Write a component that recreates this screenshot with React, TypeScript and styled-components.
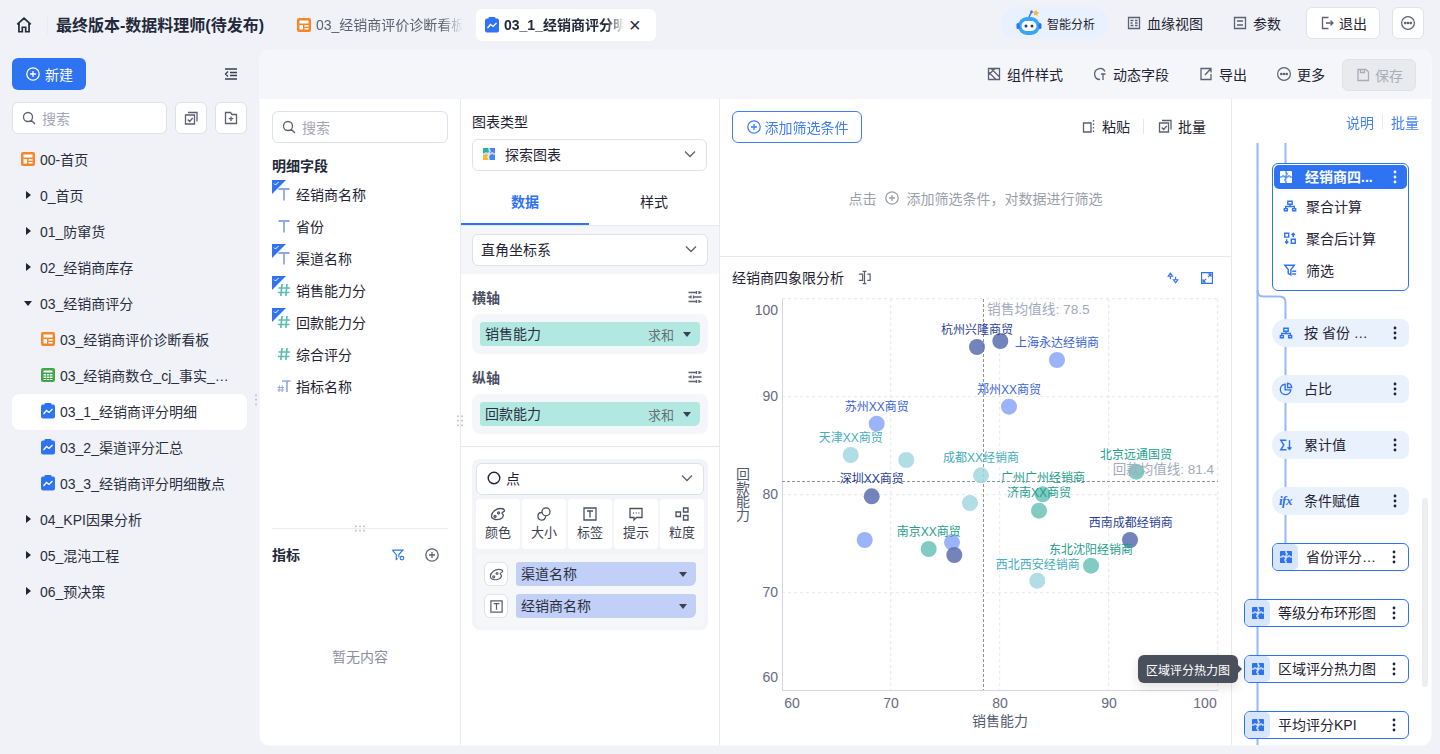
import React from 'react';
import styled, { createGlobalStyle } from 'styled-components';

const BLUE = '#2e73f2';
const INK = '#1f2333';
const ICON = '#5c6070';

const GlobalStyle = createGlobalStyle`
  html, body { margin: 0; padding: 0; height: 100%; }
  body {
    background: #f0f2f8;
    color: ${INK};
    font-family: "Liberation Sans", "Noto Sans CJK SC", sans-serif;
    font-size: 14px;
    overflow: hidden;
  }
  * { box-sizing: border-box; }
`;

/* ---------- icons ---------- */

const Line = ({ d, size = 16, color = ICON, width = 1.3 }: { d: string; size?: number; color?: string; width?: number }) => (
  <svg width={size} height={size} viewBox="0 0 16 16" fill="none" stroke={color} strokeWidth={width} style={{ flexShrink: 0 }}>
    <path d={d} />
  </svg>
);

const ICONS: Record<string, string> = {
  home: 'M2 7.5 8 2l6 5.5M3.5 6.5V14h3v-4h3v4h3V6.5',
  search: 'M7 2.5a4.5 4.5 0 1 0 0 9 4.5 4.5 0 0 0 0-9M10.3 10.3 14 14',
  collapse: 'M2 3h12M7 6.5h7M7 9.5h7M2 13h12M5 5.5 2.5 8 5 10.5',
  batch: 'M5 2.5h9v9M2.5 5h9v9h-9zM4.7 9.5l2 2 3-3.5',
  folderPlus: 'M2.5 2.5h5l1.5 2h4.5v9h-11zM8 6.5v4.5M5.8 8.7h4.5',
  style: 'M2.5 2.5h11v11h-11zM5 2.5l8.5 8.5M2.5 6l7.5 7.5M9 2.5 2.5 9',
  dynamic: 'M13 5.5A5.5 5.5 0 1 0 8 13.5M9 8h4.5M11 8v6',
  exportIcon: 'M9 2.5H3v11h10V8M7 9l5.5-6M9 2.5h4v4',
  save: 'M3 2.5h8l2.5 2.5v8.5H3zM5.5 2.5v3h4v-3',
  paste: 'M2.5 5h7.5v9H2.5zM12.5 2v1.5M12.5 5.5V7M12.5 9v1.5M12.5 12.5V14',
  lineage: 'M2.5 2.5h11v11h-11zM4.5 5.5h3M9 5.5h2.5M4.5 8h2M9 8h2.5M4.5 10.5h3M9 10.5h2.5',
  params: 'M2.5 2.5h11v11h-11zM5 6h6M5 10h6',
  logout: 'M9.5 2.5h-6v11h6M7 8h7M11.5 5.5 14 8l-2.5 2.5',
  sliders: 'M1.5 3.5h8M12 3.5h2.5M9.5 2v3M12 2v3M1.5 8H4M6.5 8h8M4 6.5v3M6.5 6.5v3M1.5 12.5h8M12 12.5h2.5M9.5 11v3M12 11v3',
  plusCircle: 'M8 1.8a6.2 6.2 0 1 0 0 12.4A6.2 6.2 0 0 0 8 1.8M8 5v6M5 8h6',
  filterDot: 'M1.5 2.5h12L9 7.5v3M6 7.5 1.5 2.5M6 7.5V13l1.5-1M12.5 9.5a2 2 0 1 0 0 4 2 2 0 0 0 0-4',
  palette: 'M1.5 10C1.5 6 6 2.5 10.5 2.5c2 0 4 1 4 2.3 0 1.2-2.5 1-2.5 2.4 0 1.3 1.8 1 1.3 2.6C13 12.5 9 14 5.5 13.5 3 13 1.5 12 1.5 10zM5 9.5a1 1 0 1 0 .1 0M8.5 6a1 1 0 1 0 .1 0',
  size: 'M10 1.8a4 4 0 1 0 0 8 4 4 0 0 0 0-8M5.5 6.5a3.8 3.8 0 1 0 4 4',
  label: 'M2 2h12v12H2zM5 5h6M8 5v6.5',
  tip: 'M2 2.5h12v9H8.5L6 14v-2.5H2zM5 7h.8M7.8 7h.8M10.5 7h.8',
  grain: 'M2 6h4.5v4.5H2zM9.5 2H14v4H9.5zM9.5 9.5H14V14H9.5z',
  tree: 'M5.5 2.5h5V6h-5zM8 6v2.5M3 11V8.5h10V11M1.5 11H5v2.5H1.5zM11 11h3.5v2.5H11z',
  postCalc: 'M2 2.5h4.5V7H2zM9.5 9.5H14V14H9.5zM11.7 7V2.5M9.8 4.5l1.9-2 1.9 2M4.2 9.5V14M2.3 12l1.9 2 1.9-2',
  filter: 'M2 2.5h11L9 7.5v6L6 12V7.5zM10.5 9.5H15M10.5 12.5H15',
  ratio: 'M7 2.5A6 6 0 1 0 13.5 9H7zM9.8 1.5a4.8 4.8 0 0 1 4.7 4.7H9.8z',
  sum: 'M8.5 2.5H2L5.5 8 2 13.5h6.5M12 2.5V13M9.8 10.5 12 13l2.2-2.5',
  swap: 'M5 2.5 2.5 6h5zM5 6v3.5M11 13.5 8.5 10h5zM11 10V6.5',
  expand: 'M1.8 1.8h12.4v12.4H1.8zM9 7l3.5-3.5M9.5 3.5h3v3M7 9l-3.5 3.5M6.5 12.5h-3v-3',
  split: 'M2 4.5h4V11H2M8 1.5v13M6 1.5h4M6 14.5h4M11 4.5h3V11h-3',
};

const Ico = ({ n, size, color, width }: { n: string; size?: number; color?: string; width?: number }) => (
  <Line d={ICONS[n]} size={size} color={color} width={width} />
);

const Caret = ({ open = false, color = '#1f2333', size = 10 }: { open?: boolean; color?: string; size?: number }) => (
  <svg width={size} height={size} viewBox="0 0 10 10" style={{ flexShrink: 0 }}>
    <path d={open ? 'M1 3h8L5 8z' : 'M3 1v8l5-4z'} fill={color} />
  </svg>
);

const Chevron = () => (
  <svg width="14" height="14" viewBox="0 0 14 14" fill="none" stroke="#5c6070" strokeWidth="1.3" style={{ flexShrink: 0 }}>
    <path d="M2 4.5 7 9.5l5-5" />
  </svg>
);

const Kebab = ({ color = '#1f2333' }: { color?: string }) => (
  <svg width="4" height="14" viewBox="0 0 4 14" style={{ flexShrink: 0 }}>
    <circle cx="2" cy="2" r="1.4" fill={color} />
    <circle cx="2" cy="7" r="1.4" fill={color} />
    <circle cx="2" cy="12" r="1.4" fill={color} />
  </svg>
);

const MoreCircle = ({ size = 16 }: { size?: number }) => (
  <svg width={size} height={size} viewBox="0 0 16 16" fill="none" stroke={ICON} strokeWidth="1.2" style={{ flexShrink: 0 }}>
    <circle cx="8" cy="8" r="6.4" />
    <circle cx="5.3" cy="8" r=".7" fill={ICON} />
    <circle cx="8" cy="8" r=".7" fill={ICON} />
    <circle cx="10.7" cy="8" r=".7" fill={ICON} />
  </svg>
);

const BoardIcon = () => (
  <svg width="14" height="14" viewBox="0 0 14 14" style={{ flexShrink: 0 }}>
    <rect width="14" height="14" rx="2" fill="#f5862a" />
    <path d="M2.5 2.5h9v3h-9zM2.5 7H6v4.5H2.5zM7.5 7h4v1.800h-4zM7.5 10h4v1.500h-4z" fill="#fff" />
  </svg>
);

const TableIcon = () => (
  <svg width="14" height="14" viewBox="0 0 14 14" style={{ flexShrink: 0 }}>
    <rect width="14" height="14" rx="2" fill="#3fa64a" />
    <path d="M2.5 2.5h9v2h-9zM2.5 6H5v1.5H2.5zM5.8 6h2.500v1.500H5.800zM9 6h2.500v1.500H9zM2.5 8.500H5V10H2.500zM5.800 8.500h2.500V10H5.800zM9 8.500h2.500V10H9zM2.500 11H5v1H2.500zM5.800 11h2.500v1H5.800zM9 11h2.500v1H9z" fill="#fff" />
  </svg>
);

const ChartIcon = () => (
  <svg width="14" height="16" viewBox="0 0 14 16" style={{ flexShrink: 0 }}>
    <rect y="1.5" width="14" height="14" rx="2" fill="#2e73f2" />
    <rect x="3.5" y="0" width="7" height="3" rx="1" fill="#2e73f2" />
    <path d="M2.5 11 5.5 7.5 8 9.5 11.5 6" fill="none" stroke="#fff" strokeWidth="1.3" />
  </svg>
);

const JIGSAW = 'M7 0v2.2a1.4 1.4 0 1 1 0 2.8V7H5a1.4 1.4 0 1 0-2.8 0H0M7 7h2.2a1.4 1.4 0 1 1 2.8 0H14M7 7v2.2a1.4 1.4 0 1 0 0 2.8V14';

const Puzzle = ({ color = BLUE, cut = '#fff', size = 14 }: { color?: string; cut?: string; size?: number }) => (
  <svg width={size} height={size} viewBox="0 0 14 14" style={{ flexShrink: 0 }}>
    <rect width="14" height="14" rx="1" fill={color} />
    <path d={JIGSAW} fill="none" stroke={cut} strokeWidth="1.3" />
  </svg>
);

const ColorPuzzle = () => (
  <svg width="12" height="12" viewBox="0 0 14 14" style={{ flexShrink: 0 }}>
    <rect width="7" height="7" fill="#22b5a4" />
    <rect x="7" width="7" height="7" fill="#5b78ee" />
    <rect y="7" width="7" height="7" fill="#f7b840" />
    <rect x="7" y="7" width="7" height="7" fill="#3d8bf5" />
    <path d={JIGSAW} fill="none" stroke="#fff" strokeWidth="1.2" />
  </svg>
);

const Robot = () => (
  <svg width="30" height="30" viewBox="0 0 30 30" style={{ flexShrink: 0 }}>
    <path d="M22 1.5l1 2.3 2.4.7-2 1.4.1 2.4-1.8-1.5-2.3.8.8-2.3-1.4-1.9 2.4.1z" fill="#f6b63c" />
    <path d="M15 9l2-4" stroke="#3b6ff0" strokeWidth="1.6" />
    <circle cx="17.5" cy="4" r="1.4" fill="#3b6ff0" />
    <rect x="4" y="9" width="22" height="18" rx="9" fill="#37a5f8" />
    <rect x="2.5" y="15" width="3" height="6" rx="1.5" fill="#2e73f2" />
    <rect x="24.5" y="15" width="3" height="6" rx="1.5" fill="#2e73f2" />
    <rect x="7.5" y="13" width="15" height="10" rx="5" fill="#fff" />
    <circle cx="12" cy="18" r="1.5" fill="#2c3a66" />
    <circle cx="18" cy="18" r="1.5" fill="#2c3a66" />
  </svg>
);

const TextType = () => (
  <svg width="14" height="14" viewBox="0 0 14 14" fill="none" stroke="#8fa8e6" strokeWidth="1.8">
    <path d="M1.5 2h11M7 2v11.5" />
  </svg>
);

const NumType = () => (
  <svg width="14" height="14" viewBox="0 0 14 14" fill="none" stroke="#5cbdb0" strokeWidth="1.7">
    <path d="M5 1 3.8 13M10 1 8.8 13M1.5 5H13M1 9.5h11.5" />
  </svg>
);

const MixType = () => (
  <svg width="14" height="14" viewBox="0 0 14 14" fill="none" strokeWidth="1">
    <path d="M5 2h8.5M10 2v11" stroke="#8fa8e6" strokeWidth="1.6" />
    <path d="M2.5 6.5 2 13M5.5 6.5 5 13M.5 8.5H7M.5 11H7" stroke="#8fa8e6" />
  </svg>
);

/* ---------- page frame ---------- */

const Page = styled.div`
  width: 1440px;
  height: 754px;
  display: flex;
  flex-direction: column;
  overflow: hidden;
  position: relative;
`;

const Header = styled.header`
  height: 50px;
  flex-shrink: 0;
  display: flex;
  align-items: center;
  padding: 0 16px 0 15px;
`;

const HomeBtn = styled.div`
  display: flex;
  align-items: center;
  height: 18px;
  padding-right: 14px;
  border-right: 1px solid #e9ebf1;
  margin-right: 8px;
`;

const Title = styled.h1`
  margin: 0 24px 0 0;
  padding-bottom: 2px;
  font-size: 16px;
  font-weight: 700;
  white-space: nowrap;
  color: #23283a;
`;

const Tab = styled.div<{ $active?: boolean }>`
  width: ${p => (p.$active ? '180px' : '188px')};
  height: 32px;
  display: flex;
  align-items: center;
  gap: 5px;
  padding: 0 9px;
  border-radius: 6px;
  background: ${p => (p.$active ? '#fff' : 'transparent')};
  font-weight: ${p => (p.$active ? 700 : 400)};
  color: ${p => (p.$active ? '#23283a' : '#5c6070')};
`;

const TabText = styled.span<{ $width: number }>`
  width: ${p => p.$width}px;
  overflow: hidden;
  white-space: nowrap;
  padding-bottom: 2px;
  -webkit-mask-image: linear-gradient(90deg, #000 85%, transparent);
  mask-image: linear-gradient(90deg, #000 85%, transparent);
`;

const Close = styled.span`
  font-size: 20px;
  font-weight: 400;
  line-height: 1;
  color: #23283a;
`;

const HeaderRight = styled.div`
  margin-left: auto;
  margin-top: -4px;
  display: flex;
  align-items: center;
`;

const AiPill = styled.div`
  width: 108px;
  height: 32px;
  border-radius: 16px;
  background: #e9f1fe;
  display: flex;
  align-items: center;
  padding-left: 13px;
  gap: 3px;
  font-size: 12px;
  margin-right: 17px;
`;

const TextAction = styled.div<{ $mr?: number; $disabled?: boolean }>`
  display: flex;
  align-items: center;
  gap: 5px;
  white-space: nowrap;
  margin-right: ${p => p.$mr ?? 0}px;
  color: ${p => (p.$disabled ? '#a9adb8' : INK)};
`;

const OutlineBtn = styled.div<{ $w: number; $mr?: number }>`
  width: ${p => p.$w}px;
  height: 32px;
  margin-right: ${p => p.$mr ?? 0}px;
  background: #fff;
  border: 1px solid #dfe3ec;
  border-radius: 6px;
  display: flex;
  align-items: center;
  justify-content: center;
  gap: 4px;
`;

const Body = styled.div`
  flex: 1;
  min-height: 0;
  display: flex;
`;

/* ---------- sidebar ---------- */

const Sidebar = styled.aside`
  width: 259px;
  flex-shrink: 0;
  padding: 8px 12px 0;
  position: relative;
`;

const SideTop = styled.div`
  display: flex;
  align-items: center;
  justify-content: space-between;
  padding-right: 8px;
  margin-bottom: 12px;
`;

const NewBtn = styled.div`
  width: 74px;
  height: 32px;
  border-radius: 6px;
  background: ${BLUE};
  color: #fff;
  display: flex;
  align-items: center;
  justify-content: center;
  gap: 4px;
`;

const SearchRow = styled.div`
  display: flex;
  gap: 8px;
  margin-bottom: 8px;
`;

const SearchBox = styled.div<{ $w: number }>`
  width: ${p => p.$w}px;
  height: 32px;
  background: #fff;
  border: 1px solid #dde1ea;
  border-radius: 6px;
  display: flex;
  align-items: center;
  padding-left: 8px;
  gap: 5px;
  color: #a4a8b4;
`;

const SquareBtn = styled.div`
  width: 32px;
  height: 32px;
  background: #fff;
  border: 1px solid #dde1ea;
  border-radius: 6px;
  display: flex;
  align-items: center;
  justify-content: center;
`;

const TreeRow = styled.div<{ $active?: boolean; $indent: number }>`
  height: 36px;
  width: 235px;
  display: flex;
  align-items: center;
  gap: 5px;
  padding-left: ${p => p.$indent}px;
  padding-bottom: 2px;
  border-radius: 8px;
  background: ${p => (p.$active ? '#fff' : 'transparent')};
  white-space: nowrap;
  color: #2a2e3e;
`;

const TreeToggle = styled.span`
  width: 14px;
  display: flex;
  justify-content: center;
  margin-left: 4px;
`;

const Dots = styled.span<{ $left: number; $top: number; $w?: number; $h?: number }>`
  position: absolute;
  left: ${p => p.$left}px;
  top: ${p => p.$top}px;
  width: ${p => p.$w ?? 4}px;
  height: ${p => p.$h ?? 14}px;
  background: radial-gradient(circle, #b5b9c4 .8px, transparent 1.1px) 0 0 / 4px 4.5px;
`;

/* ---------- editor ---------- */

const Editor = styled.main`
  width: 1173px;
  height: 696px;
  background: #fff;
  border-radius: 10px;
  border: 1px solid #f7f8fb;
  display: flex;
  flex-direction: column;
  overflow: hidden;
`;

const Toolbar = styled.div`
  height: 48px;
  flex-shrink: 0;
  background: #f5f6fa;
  display: flex;
  align-items: center;
  justify-content: flex-end;
  padding: 0 15px 2px 0;
  gap: 29px;
`;

const SaveBtn = styled.div`
  width: 74px;
  height: 32px;
  margin-top: 2px;
  margin-left: -12px;
  border-radius: 6px;
  background: #e9eaee;
  border: 1px solid #e0e2e7;
  display: flex;
  align-items: center;
  justify-content: center;
  gap: 4px;
  color: #a9adb8;
`;

const Columns = styled.div`
  flex: 1;
  min-height: 0;
  display: grid;
  position: relative;
  grid-template-columns: 201px 259px 512px 200px;
`;

const Column = styled.section`
  border-right: 1px solid #e8eaef;
  position: relative;
  min-height: 0;
  overflow: hidden;
  &:last-child { border-right: 0; }
`;

const FieldList = styled.div`
  height: 429px;
  padding: 12px 12px 0;
`;

const Splitter = styled.div`
  height: 1px;
  margin: 0 12px;
  background: #eceef2;
`;

const Bold = styled.div`
  font-weight: 700;
  color: #23283a;
`;

const FieldHead = styled(Bold)`
  margin: 15px 0 4px;
  line-height: 16px;
`;

const FieldRow = styled.div`
  height: 32px;
  display: flex;
  align-items: center;
  gap: 5px;
  padding-left: 5px;
  position: relative;
`;

const Corner = styled.svg`
  position: absolute;
  left: 0;
  top: 2px;
`;

const MeasureHead = styled.div`
  padding: 15px 20px 0 12px;
  display: flex;
  align-items: center;
`;

const MeasureTools = styled.div`
  margin-left: auto;
  margin-top: 2px;
  display: flex;
  align-items: center;
  gap: 19px;
`;

const Empty = styled.div`
  text-align: center;
  color: #8b8f9b;
  font-size: 14px;
  margin-top: 82px;
`;

const ConfigPad = styled.div`
  padding: 14px 12px 0 11px;
`;

const FormLabel = styled.div`
  margin-bottom: 8px;
  line-height: 18px;
`;

const Select = styled.div`
  height: 32px;
  background: #fff;
  border: 1px solid #dde1ea;
  border-radius: 6px;
  display: flex;
  align-items: center;
  gap: 10px;
  padding: 0 9px 2px 10px;
  & > span { flex: 1; }
`;

const PointSelect = styled(Select)`
  gap: 5px;
`;

const TabBar = styled.div`
  display: grid;
  grid-template-columns: 128px 1fr;
  height: 46px;
  margin-top: 9px;
  border-bottom: 1px solid #e6e8ee;
`;

const TabItem = styled.div<{ $on?: boolean }>`
  display: flex;
  align-items: center;
  justify-content: center;
  font-weight: ${p => (p.$on ? 700 : 400)};
  color: ${p => (p.$on ? BLUE : INK)};
  border-bottom: ${p => (p.$on ? `2px solid ${BLUE}` : '0')};
  padding-bottom: ${p => (p.$on ? 2 : 4)}px;
`;

const Band = styled.div`
  background: #f5f6f9;
  height: 48px;
  padding: 8px 11px;
  & > div { padding: 0 9px 2px 8px; }
`;

const AxisHead = styled.div`
  height: 24px;
  padding: 0 16px 2px 11px;
  display: flex;
  align-items: center;
  justify-content: space-between;
  font-weight: 700;
  color: #4b5163;
  margin-top: 12px;
`;

const Well = styled.div`
  margin: 4px 11px 0;
  height: 40px;
  padding: 8px;
  background: #f5f6f9;
  border-radius: 8px;
`;

const Chip = styled.div<{ $color: string; $w: number }>`
  width: ${p => p.$w}px;
  height: 24px;
  background: ${p => p.$color};
  border-radius: 3px 3px 6px 3px;
  display: flex;
  align-items: center;
  padding: 0 8px 0 5px;
  color: #2b3040;
  & > span:first-child { flex: 1; padding-bottom: 2px; }
`;

const Agg = styled.span`
  font-size: 13px;
  color: #6a6e7a;
  margin-right: 8px;
`;

const MarkCard = styled.div`
  margin: 12px 11px 0;
  padding: 4px;
  height: 171px;
  background: #f3f4f8;
  border-radius: 8px;
`;

const Rule = styled.div`
  height: 1px;
  background: #e6e8ee;
  margin-top: 12px;
`;

const MarkGrid = styled.div`
  display: grid;
  grid-template-columns: repeat(5, 44px);
  gap: 2px;
  margin: 4px 0;
`;

const MarkBtn = styled.div`
  height: 50px;
  background: #fff;
  border-radius: 4px;
  display: flex;
  flex-direction: column;
  align-items: center;
  justify-content: center;
  gap: 3px;
  padding-bottom: 1px;
  font-size: 13px;
  color: #3c4150;
  line-height: 16px;
`;

const MarkFields = styled.div`
  margin-top: 5px;
  height: 72px;
  background: #f6f7f9;
  border-radius: 4px;
  padding: 8px;
  display: flex;
  flex-direction: column;
  gap: 8px;
`;

const MarkFieldRow = styled.div`
  display: flex;
  gap: 8px;
`;

const MarkIcon = styled.div`
  width: 24px;
  height: 24px;
  border: 1px solid #dde1ea;
  border-radius: 6px;
  background: #fff;
  display: flex;
  align-items: center;
  justify-content: center;
`;

/* ---------- chart column ---------- */

const FilterZone = styled.div`
  height: 158px;
  padding: 12px 12px 0;
  border-bottom: 1px solid #e8eaef;
`;

const FilterTop = styled.div`
  display: flex;
  align-items: center;
  justify-content: space-between;
  padding-right: 13px;
`;

const AddFilter = styled.div`
  width: 130px;
  height: 32px;
  border: 1px solid ${BLUE};
  border-radius: 6px;
  color: ${BLUE};
  display: flex;
  align-items: center;
  justify-content: center;
  gap: 3px;
  opacity: 0.92;
`;

const FilterTools = styled.div`
  display: flex;
  align-items: center;
  gap: 13px;
  padding-bottom: 2px;
`;

const VRule = styled.span`
  width: 1px;
  height: 15px;
  background: #e4e6ec;
`;

const Hint = styled.div`
  display: flex;
  justify-content: center;
  align-items: center;
  gap: 7px;
  color: #9b9fab;
  font-size: 14px;
  margin: 45px -12px 0;
`;

const ChartHead = styled.div`
  height: 34px;
  padding: 6px 17px 0 12px;
  display: flex;
  align-items: center;
  & > svg:first-of-type { margin-left: 13px; }
`;

const ChartTools = styled.div`
  margin-left: auto;
  margin-top: 2px;
  display: flex;
  gap: 20px;
`;

const ChartSvg = styled.svg`
  display: block;
  font-family: "Liberation Sans", "Noto Sans CJK SC", sans-serif;
`;

/* ---------- pipeline column ---------- */

const Pipeline = styled.div`
  position: relative;
  height: 100%;
`;

const PipeLinks = styled.div`
  height: 44px;
  display: flex;
  justify-content: flex-end;
  align-items: center;
  gap: 8px;
  padding: 1px 12px 0 0;
  color: ${BLUE};
  opacity: 0.9;
`;

const Connectors = styled.svg`
  position: absolute;
  left: 0;
  top: 0;
`;

const PipeList = styled.div`
  position: relative;
  padding-top: 20px;
  display: flex;
  flex-direction: column;
  gap: 28px;
  align-items: flex-end;
  padding-right: 22px;
`;

const Group = styled.div`
  width: 137px;
  height: 128px;
  border: 1px solid ${BLUE};
  border-radius: 6px;
  background: #fff;
  padding: 1px;
`;

const GroupHead = styled.div`
  height: 24px;
  background: ${BLUE};
  border-radius: 5px;
  color: #fff;
  font-weight: 700;
  display: flex;
  align-items: center;
  padding: 0 10px 0 6px;
  margin-bottom: 1px;
  & > span { flex: 1; margin-left: 13px; padding-bottom: 2px; }
`;

const GroupItem = styled.div`
  height: 32px;
  display: flex;
  align-items: center;
  gap: 9px;
  padding-left: 9px;
`;

const Pill = styled.div`
  width: 137px;
  height: 28px;
  background: #e9f1fd;
  border-radius: 14px 8px 8px 14px;
  display: flex;
  align-items: center;
  padding: 0 12px 0 7px;
  & > span { flex: 1; margin-left: 11px; padding-bottom: 2px; white-space: nowrap; }
`;

const IfGlyph = styled.i`
  width: 14px;
  flex-shrink: 0;
  font-family: "Liberation Serif", serif;
  font-size: 13px;
  font-weight: 700;
  letter-spacing: -0.5px;
  color: ${BLUE};
  white-space: nowrap;
`;

const Card = styled.div<{ $w: number }>`
  width: ${p => p.$w}px;
  height: 28px;
  background: #fff;
  border: 1px solid ${BLUE};
  border-radius: 6px;
  display: flex;
  align-items: center;
  padding: 0 12px 0 0;
  & > span:nth-child(2) { flex: 1; margin-left: 8px; padding-bottom: 2px; white-space: nowrap; }
`;

const CardIcon = styled.span`
  width: 25px;
  height: 26px;
  background: #d7e5fd;
  border-radius: 5px;
  display: flex;
  align-items: center;
  justify-content: center;
`;

const ScrollThumb = styled.div`
  position: absolute;
  right: 3px;
  top: 399px;
  width: 6px;
  height: 189px;
  border-radius: 3px;
  background: #eceef1;
`;

const Tooltip = styled.div`
  position: absolute;
  left: 1138px;
  top: 655px;
  width: 100px;
  height: 28px;
  background: #4a4f5c;
  border-radius: 6px;
  color: #fff;
  font-size: 12px;
  display: flex;
  align-items: center;
  justify-content: center;
  box-shadow: 0 4px 12px rgba(0, 0, 0, 0.12);
  &::after {
    content: '';
    position: absolute;
    right: -4px;
    top: 10px;
    border-left: 4px solid #4a4f5c;
    border-top: 4px solid transparent;
    border-bottom: 4px solid transparent;
  }
`;

/* ---------- data ---------- */

type TreeItem = { label: string; kind?: 'board' | 'table' | 'chart'; depth?: 1; folder?: 'open' | 'closed'; active?: boolean };

const tree: TreeItem[] = [
  { label: '00-首页', kind: 'board' },
  { label: '0_首页', folder: 'closed' },
  { label: '01_防窜货', folder: 'closed' },
  { label: '02_经销商库存', folder: 'closed' },
  { label: '03_经销商评分', folder: 'open' },
  { label: '03_经销商评价诊断看板', kind: 'board', depth: 1 },
  { label: '03_经销商数仓_cj_事实_…', kind: 'table', depth: 1 },
  { label: '03_1_经销商评分明细', kind: 'chart', depth: 1, active: true },
  { label: '03_2_渠道评分汇总', kind: 'chart', depth: 1 },
  { label: '03_3_经销商评分明细散点', kind: 'chart', depth: 1 },
  { label: '04_KPI因果分析', folder: 'closed' },
  { label: '05_混沌工程', folder: 'closed' },
  { label: '06_预决策', folder: 'closed' },
];

const fields = [
  { label: '经销商名称', type: 'text', checked: true },
  { label: '省份', type: 'text' },
  { label: '渠道名称', type: 'text', checked: true },
  { label: '销售能力分', type: 'num', checked: true },
  { label: '回款能力分', type: 'num', checked: true },
  { label: '综合评分', type: 'num' },
  { label: '指标名称', type: 'mix' },
];

const marks = [
  { label: '颜色', icon: 'palette' },
  { label: '大小', icon: 'size' },
  { label: '标签', icon: 'label' },
  { label: '提示', icon: 'tip' },
  { label: '粒度', icon: 'grain' },
];

const DARK = '#5a6db0';
const LIGHT = '#8aa6f8';
const CYAN = '#a3d7e0';
const TEAL = '#6cc2b8';

const points: [number, number, string][] = [
  [977, 347, DARK], [1000.3, 341, DARK], [1057, 360, LIGHT], [1009, 406.7, LIGHT], [876.7, 423.7, LIGHT],
  [850.7, 455, CYAN], [906.3, 460, CYAN], [981, 475.3, CYAN], [1136.3, 471.7, TEAL], [1042.7, 494.3, TEAL],
  [871.7, 496.3, DARK], [970, 503, CYAN], [1039, 510.7, TEAL], [1130, 540, DARK], [864.7, 540, LIGHT],
  [952, 542.3, LIGHT], [928.7, 549, TEAL], [954.3, 555, DARK], [1091, 565.7, TEAL], [1037.3, 580.7, CYAN],
];

const L_DARK = '#2b3f98';
const L_BLUE = '#3b63dc';
const L_CYAN = '#45adc0';
const L_TEAL = '#1ea08e';

const labels: [string, number, number, string][] = [
  ['杭州兴隆商贸', 977, 329, L_DARK],
  ['上海永达经销商', 1057, 342.7, L_BLUE],
  ['郑州XX商贸', 1009, 389.7, L_BLUE],
  ['苏州XX商贸', 876.7, 406.7, L_BLUE],
  ['天津XX商贸', 850.7, 437.7, L_CYAN],
  ['成都XX经销商', 981, 457.7, L_CYAN],
  ['北京远通国贸', 1136, 454.7, L_TEAL],
  ['广州广州经销商', 1043, 477, L_TEAL],
  ['济南XX商贸', 1039, 492.5, L_TEAL],
  ['深圳XX商贸', 871.7, 478.7, L_DARK],
  ['南京XX商贸', 928.7, 531.7, L_TEAL],
  ['西南成都经销商', 1130.7, 522.7, L_DARK],
  ['东北沈阳经销商', 1091, 549, L_TEAL],
  ['西北西安经销商', 1037.7, 564, L_CYAN],
];

const gridX = [890.7, 999.7, 1108.7, 1217.7];
const gridY = [298.7, 396.7, 494.7, 592.7];
const tickX: [string, number][] = [['60', 792], ['70', 891], ['80', 1000], ['90', 1109], ['100', 1205]];
const tickY: [string, number][] = [['100', 315], ['90', 401], ['80', 499], ['70', 597], ['60', 682]];

const ScatterChart = () => (
  <ChartSvg width="511" height="455" viewBox="720 291 511 455">
    {gridX.map(x => <line key={x} x1={x} x2={x} y1="299" y2="690" stroke="#e6e7eb" strokeDasharray="3 3" />)}
    {gridY.map(y => <line key={y} x1="782" x2="1218" y1={y} y2={y} stroke="#e6e7eb" strokeDasharray="3 3" />)}
    <path d="M782.5 299v391.5H1218" fill="none" stroke="#d3d5df" />
    <line x1="983.5" x2="983.5" y1="299" y2="690" stroke="#8e929e" strokeDasharray="3 2" />
    <line x1="782" x2="1218" y1="481.5" y2="481.5" stroke="#8e929e" strokeDasharray="3 2" />
    {points.map(([x, y, c]) => <circle key={`${x}-${y}`} cx={x} cy={y} r="8" fill={c} opacity="0.85" />)}
    {labels.map(([t, x, y, c]) => (
      <text key={t} x={x} y={y + 4.5} textAnchor="middle" fontSize="12" fill={c}>{t}</text>
    ))}
    <text x="987" y="314" fontSize="13.7" fill="#a3abbd">销售均值线: 78.5</text>
    <text x="1214" y="474" fontSize="13.5" fill="#a3abbd" textAnchor="end">回款均值线: 81.4</text>
    {tickX.map(([t, x]) => <text key={t} x={x} y="708" fontSize="14" textAnchor="middle" fill="#676b80">{t}</text>)}
    {tickY.map(([t, y]) => <text key={t} x="778" y={y} fontSize="14" textAnchor="end" fill="#676b80">{t}</text>)}
    {['回', '款', '能', '力'].map((c, i) => (
      <text key={c} x="743" y={479 + i * 13.7} fontSize="14" textAnchor="middle" fill="#565a70">{c}</text>
    ))}
    <text x="1000" y="726" fontSize="14" textAnchor="middle" fill="#565a70">销售能力</text>
  </ChartSvg>
);

const CheckCorner = () => (
  <Corner width="14" height="14" viewBox="0 0 14 14">
    <path d="M0 0h14L0 14z" fill={BLUE} />
    <path d="M2 3.5 3.5 5 6.5 2" fill="none" stroke="#fff" strokeWidth="1" />
  </Corner>
);

const pipelinePills = [
  { label: '按 省份 …', icon: 'tree' },
  { label: '占比', icon: 'ratio' },
  { label: '累计值', icon: 'sum' },
];

export default function App() {
  return (
    <Page>
      <GlobalStyle />
      <Header>
        <HomeBtn><Ico n="home" size={18} color="#23283a" width={1.5} /></HomeBtn>
        <Title>最终版本-数据料理师(待发布)</Title>
        <Tab>
          <BoardIcon />
          <TabText $width={147}>03_经销商评价诊断看板</TabText>
        </Tab>
        <Tab $active>
          <ChartIcon />
          <TabText $width={120}>03_1_经销商评分明细</TabText>
          <Close>×</Close>
        </Tab>
        <HeaderRight>
          <AiPill><Robot />智能分析</AiPill>
          <TextAction $mr={29}><Ico n="lineage" />血缘视图</TextAction>
          <TextAction $mr={25}><Ico n="params" />参数</TextAction>
          <OutlineBtn $w={74} $mr={12}><Ico n="logout" />退出</OutlineBtn>
          <OutlineBtn $w={32}><MoreCircle /></OutlineBtn>
        </HeaderRight>
      </Header>

      <Body>
        <Sidebar>
          <SideTop>
            <NewBtn><Ico n="plusCircle" color="#fff" />新建</NewBtn>
            <Ico n="collapse" color="#3a3f4e" />
          </SideTop>
          <SearchRow>
            <SearchBox $w={155}><Ico n="search" />搜索</SearchBox>
            <SquareBtn><Ico n="batch" /></SquareBtn>
            <SquareBtn><Ico n="folderPlus" /></SquareBtn>
          </SearchRow>
          {tree.map(item => (
            <TreeRow key={item.label} $active={item.active} $indent={item.depth ? 29 : item.kind ? 9 : 5}>
              {item.folder && <TreeToggle><Caret open={item.folder === 'open'} /></TreeToggle>}
              {item.kind === 'board' && <BoardIcon />}
              {item.kind === 'table' && <TableIcon />}
              {item.kind === 'chart' && <ChartIcon />}
              {item.label}
            </TreeRow>
          ))}
          <Dots $left={254} $top={343} />
        </Sidebar>

        <Editor>
          <Toolbar>
            <TextAction><Ico n="style" />组件样式</TextAction>
            <TextAction><Ico n="dynamic" />动态字段</TextAction>
            <TextAction><Ico n="exportIcon" />导出</TextAction>
            <TextAction><MoreCircle />更多</TextAction>
            <SaveBtn><Ico n="save" color="#a9adb8" />保存</SaveBtn>
          </Toolbar>

          <Columns>
            <Column>
              <FieldList>
                <SearchBox $w={176}><Ico n="search" />搜索</SearchBox>
                <FieldHead>明细字段</FieldHead>
                {fields.map(f => (
                  <FieldRow key={f.label}>
                    {f.checked && <CheckCorner />}
                    {f.type === 'text' && <TextType />}
                    {f.type === 'num' && <NumType />}
                    {f.type === 'mix' && <MixType />}
                    {f.label}
                  </FieldRow>
                ))}
              </FieldList>
              <Splitter />
              <Dots $left={94} $top={425} $w={13} $h={9} />
              <MeasureHead>
                <Bold>指标</Bold>
                <MeasureTools>
                  <Ico n="filterDot" size={14} color={BLUE} />
                  <Ico n="plusCircle" />
                </MeasureTools>
              </MeasureHead>
              <Empty>暂无内容</Empty>
            </Column>

            <Column>
              <ConfigPad>
                <FormLabel>图表类型</FormLabel>
                <Select>
                  <ColorPuzzle />
                  <span>探索图表</span>
                  <Chevron />
                </Select>
              </ConfigPad>
              <TabBar>
                <TabItem $on>数据</TabItem>
                <TabItem>样式</TabItem>
              </TabBar>
              <Band>
                <Select><span>直角坐标系</span><Chevron /></Select>
              </Band>
              <AxisHead>横轴<Ico n="sliders" color="#5c6070" /></AxisHead>
              <Well>
                <Chip $color="#b1e8e1" $w={220}>
                  <span>销售能力</span><Agg>求和</Agg><Caret open color="#3c4150" />
                </Chip>
              </Well>
              <AxisHead>纵轴<Ico n="sliders" color="#5c6070" /></AxisHead>
              <Well>
                <Chip $color="#b1e8e1" $w={220}>
                  <span>回款能力</span><Agg>求和</Agg><Caret open color="#3c4150" />
                </Chip>
              </Well>
              <Rule />
              <MarkCard>
                <PointSelect>
                  <svg width="14" height="14" viewBox="0 0 14 14" fill="none" stroke="#23283a" strokeWidth="1.4"><circle cx="7" cy="7" r="5.8" /></svg>
                  <span>点</span>
                  <Chevron />
                </PointSelect>
                <MarkGrid>
                  {marks.map(m => (
                    <MarkBtn key={m.label}><Ico n={m.icon} color="#4b5163" />{m.label}</MarkBtn>
                  ))}
                </MarkGrid>
                <MarkFields>
                  <MarkFieldRow>
                    <MarkIcon><Ico n="palette" size={15} /></MarkIcon>
                    <Chip $color="#c2cff7" $w={180}><span>渠道名称</span><Caret open color="#3c4150" /></Chip>
                  </MarkFieldRow>
                  <MarkFieldRow>
                    <MarkIcon><Ico n="label" size={15} /></MarkIcon>
                    <Chip $color="#c2cff7" $w={180}><span>经销商名称</span><Caret open color="#3c4150" /></Chip>
                  </MarkFieldRow>
                </MarkFields>
              </MarkCard>
            </Column>

            <Column>
              <FilterZone>
                <FilterTop>
                  <AddFilter><Ico n="plusCircle" color={BLUE} />添加筛选条件</AddFilter>
                  <FilterTools>
                    <TextAction><Ico n="paste" />粘贴</TextAction>
                    <VRule />
                    <TextAction><Ico n="batch" />批量</TextAction>
                  </FilterTools>
                </FilterTop>
                <Hint>点击<Ico n="plusCircle" color="#9b9fab" />添加筛选条件，对数据进行筛选</Hint>
              </FilterZone>
              <ChartHead>
                经销商四象限分析
                <Ico n="split" size={15} />
                <ChartTools>
                  <Ico n="swap" color={BLUE} size={14} />
                  <Ico n="expand" color={BLUE} size={14} />
                </ChartTools>
              </ChartHead>
              <ScatterChart />
            </Column>

            <Column>
              <Pipeline>
                <PipeLinks>说明<VRule />批量</PipeLinks>
                <Connectors width="200" height="647" viewBox="1232 99 200 647" fill="none" stroke="#97b8f8" strokeWidth="2">
                  <path d="M1257.5 143V746" />
                  <path d="M1285.5 143V164" />
                  <path d="M1257.5 290c0 4 2 6.5 6 6.5h16c4 0 6 2 6 6V570" />
                </Connectors>
                <PipeList>
                  <Group>
                    <GroupHead>
                      <Puzzle color="#fff" cut={BLUE} size={12} />
                      <span>经销商四...</span>
                      <Kebab color="#fff" />
                    </GroupHead>
                    <GroupItem><Ico n="tree" color={BLUE} size={14} width={1.6} />聚合计算</GroupItem>
                    <GroupItem><Ico n="postCalc" color={BLUE} size={14} width={1.6} />聚合后计算</GroupItem>
                    <GroupItem><Ico n="filter" color={BLUE} size={14} width={1.6} />筛选</GroupItem>
                  </Group>
                  {pipelinePills.map(p => (
                    <Pill key={p.label}>
                      <Ico n={p.icon} color={BLUE} size={14} width={1.6} />
                      <span>{p.label}</span>
                      <Kebab />
                    </Pill>
                  ))}
                  <Pill>
                    <IfGlyph>ifx</IfGlyph>
                    <span>条件赋值</span>
                    <Kebab />
                  </Pill>
                  <Card $w={137}>
                    <CardIcon><Puzzle size={12} /></CardIcon>
                    <span>省份评分…</span>
                    <Kebab />
                  </Card>
                  <Card $w={165}>
                    <CardIcon><Puzzle size={12} /></CardIcon>
                    <span>等级分布环形图</span>
                    <Kebab />
                  </Card>
                  <Card $w={165}>
                    <CardIcon><Puzzle size={12} /></CardIcon>
                    <span>区域评分热力图</span>
                    <Kebab />
                  </Card>
                  <Card $w={165}>
                    <CardIcon><Puzzle size={12} /></CardIcon>
                    <span>平均评分KPI</span>
                    <Kebab />
                  </Card>
                </PipeList>
                <ScrollThumb />
              </Pipeline>
            </Column>
            <Dots $left={196} $top={315} $w={9} />
          </Columns>
        </Editor>
      </Body>
      <Tooltip>区域评分热力图</Tooltip>
    </Page>
  );
}
